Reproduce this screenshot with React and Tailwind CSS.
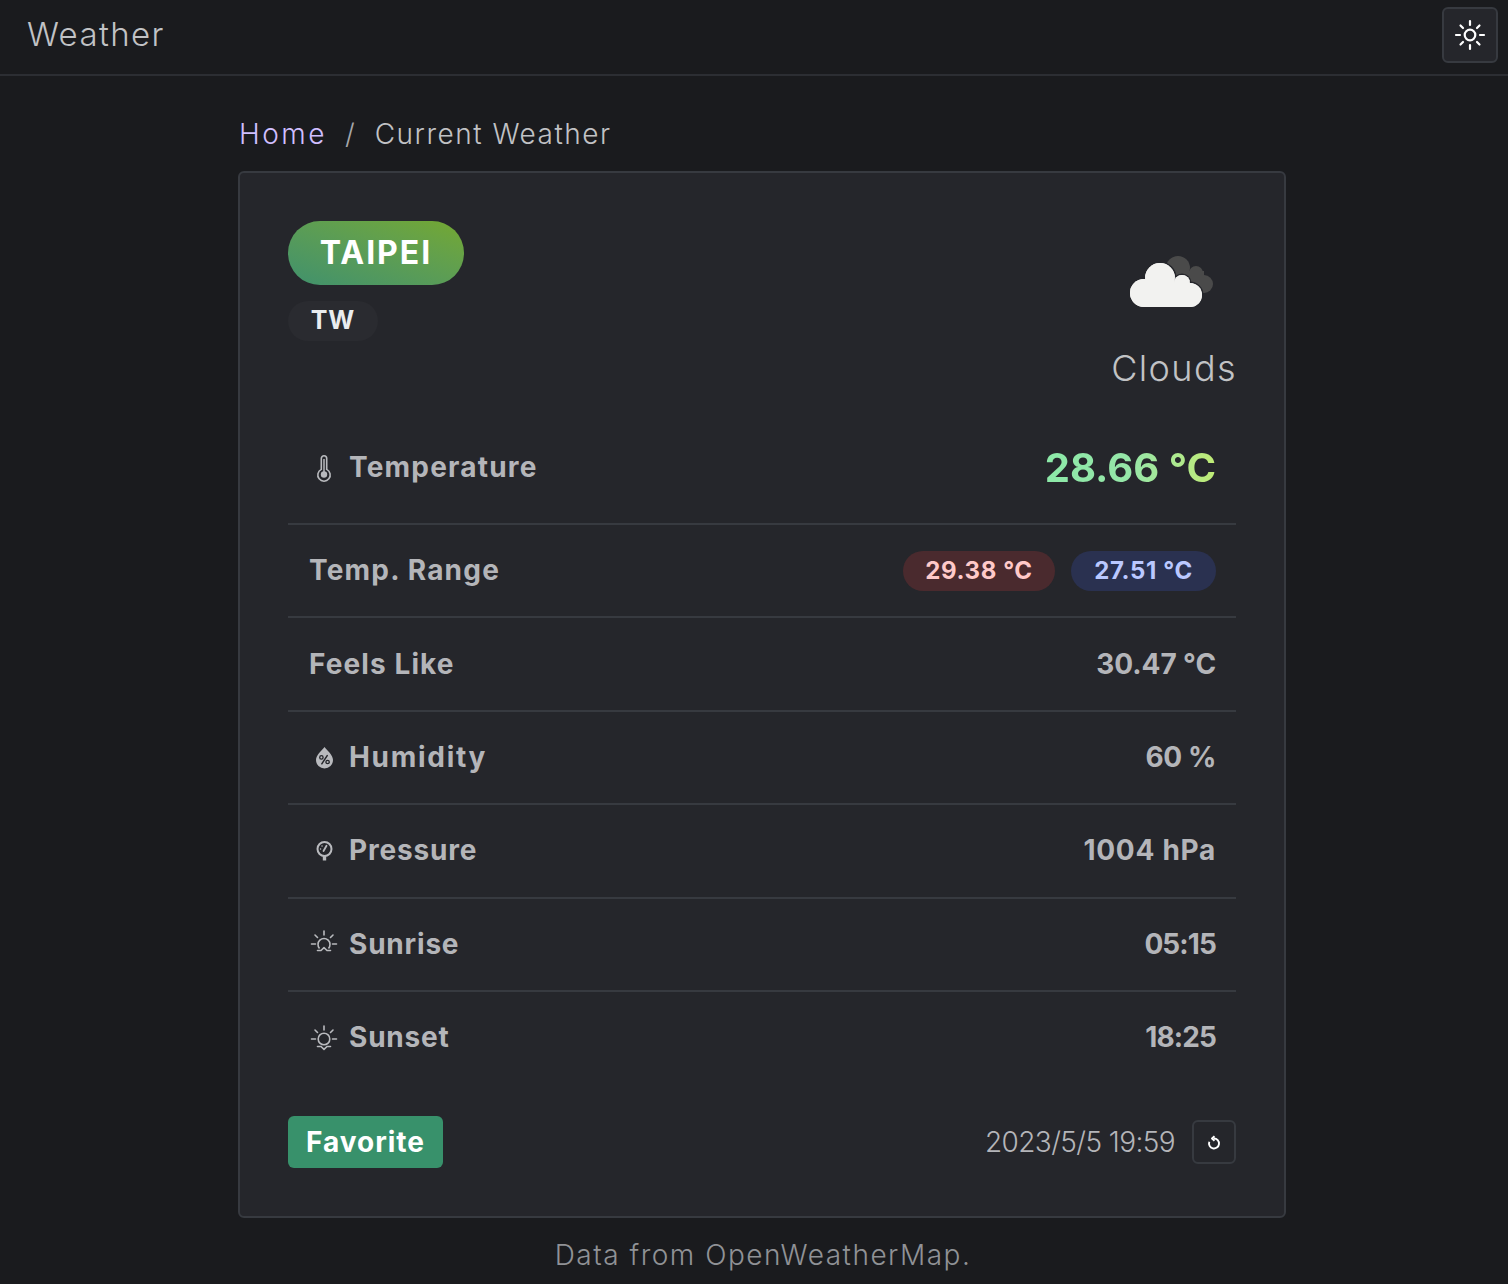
import React from "react";

const C = "#b9babe";
const Thermo = () => (
  <svg width="30" height="30" viewBox="0 0 30 30" fill="none" stroke={C} strokeWidth="1.600">
    <path d="M12.300 5.500a2.700 2.700 0 0 1 5.400 0v10.900a6.200 6.200 0 1 1-5.400 0z" />
    <circle cx="15" cy="21.500" r="3.200" fill={C} stroke="none" />
    <path d="M15 6v13" strokeWidth="1.500" />
  </svg>
);
const Drop = () => (
  <svg width="30" height="30" viewBox="0 0 30 30" fill="none">
    <path d="M15.500 5c3 3.800 8.500 8 8.500 13a8.500 8.500 0 0 1-17 0c0-5 5.500-9.200 8.500-13z" fill={C} />
    <path d="M12.800 21.800l5.400-8.200" stroke="#25262b" strokeWidth="1.500" strokeLinecap="round" />
    <circle cx="12.400" cy="15.400" r="1.700" stroke="#25262b" strokeWidth="1.300" />
    <circle cx="18.600" cy="20" r="1.700" stroke="#25262b" strokeWidth="1.300" />
  </svg>
);
const Gauge = () => (
  <svg width="30" height="30" viewBox="0 0 30 30" fill="none" stroke={C}>
    <circle cx="15.500" cy="13" r="7" strokeWidth="2" />
    <path d="M15.500 20v4.500" strokeWidth="3.400" />
    <path d="M14.500 15l3-5.300" strokeWidth="1.800" strokeLinecap="round" />
    <path d="M11.500 13h.1M13 10h.1" strokeWidth="1.400" strokeLinecap="round" />
  </svg>
);
const Rays = ({ y = 15 }) => (
  <path d={`M2.500 ${y}h4M23.500 ${y}h4M15 ${y - 13}v4M6 ${y - 9}l2.500 2.500M24 ${y - 9}l-2.500 2.500`} strokeLinecap="round" />
);
const Sunrise = () => (
  <svg width="30" height="30" viewBox="0 0 30 30" fill="none" stroke={C} strokeWidth="1.600">
    <Rays />
    <path d="M10.500 19.500a6 6 0 1 1 9 0" />
    <path d="M8.500 21.500h3.500l3-2.800 3 2.800h3.500" strokeLinejoin="round" strokeLinecap="round" />
  </svg>
);
const Sunset = () => (
  <svg width="30" height="30" viewBox="0 0 30 30" fill="none" stroke={C} strokeWidth="1.600">
    <Rays y={15} />
    <circle cx="15" cy="15" r="5.800" />
    <path d="M8.500 22.500h3.500l3 2.800 3-2.800h3.500" strokeLinejoin="round" strokeLinecap="round" />
  </svg>
);
const Cloud = () => (
  <svg width="84" height="52" viewBox="0 0 84 52">
    <g fill="#4a4a4a">
      <circle cx="48" cy="13" r="12" />
      <circle cx="66" cy="18" r="7" />
      <circle cx="74" cy="29" r="9" />
      <rect x="46" y="16" width="28" height="22" />
    </g>
    <g fill="#f2f2f0" stroke="#25262b" strokeWidth="3" paintOrder="stroke">
      <circle cx="30" cy="23" r="15" />
      <circle cx="52" cy="28" r="8" />
      <circle cx="14" cy="38" r="14" />
      <circle cx="60" cy="40" r="12" />
    </g>
    <g fill="#f2f2f0">
      <circle cx="30" cy="23" r="15" />
      <circle cx="52" cy="28" r="8" />
      <circle cx="14" cy="38" r="14" />
      <circle cx="60" cy="40" r="12" />
      <rect x="14" y="28" width="46" height="24" />
    </g>
  </svg>
);

function Row({ icon, label, track, shift = "-translate-y-[1px]", children, first, last }) {
  return (
    <div className={`flex items-center justify-between pl-[21px] pr-[20px] ${first ? "h-[111px] pb-[2px]" : "h-[93.400px]"} ${last ? "" : "border-b-2 border-[#373a40]"}`}>
      <div className="flex items-center">
        {icon && <span className="flex w-[30px] h-[30px] mr-[10px] shrink-0">{icon}</span>}
        <span className={`text-[28px] font-bold text-[#b4b5b9] ${shift} ${track}`}>{label}</span>
      </div>
      {children}
    </div>
  );
}

const Val = ({ track, shift = "-translate-y-[1px]", children }) => <span className={`text-[28px] font-bold text-[#b4b5b9] ${shift} ${track}`}>{children}</span>;

export default function App() {
  return (
    <div className="min-h-[1284px] bg-[#1a1b1e] text-[#c1c2c5] font-['Inter','Noto_Sans',sans-serif] overflow-hidden">
      <header className="h-[76px] border-b-2 border-[#2c2e33] flex items-center justify-between pl-[27px] pr-[10px] pb-[4px]">
        <span className="text-[33px] font-light tracking-[1.400px] text-[#c1c2c5]">Weather</span>
        <button className="w-[56px] h-[56px] rounded-[6px] bg-[#25262b] border-2 border-[#373a40] flex items-center justify-center">
          <svg width="32" height="32" viewBox="0 0 32 32" fill="none" stroke="#fff" strokeWidth="2.200" strokeLinecap="round">
            <circle cx="16" cy="16" r="5.300" />
            <path d="M2 16h4M26 16h4M16 2v4M16 26v4M6.500 6.500l2.500 2.500M25.500 6.500l-2.500 2.500M6.500 25.500l2.500-2.500M25.500 25.500l-2.500-2.500" />
          </svg>
        </button>
      </header>
      <main className="w-[1048px] ml-[238px]">
        <div className="h-[95px] flex items-center pt-[20px] text-[28px] font-light">
          <span className="text-[#d0bfff] tracking-[2.500px] ml-[1px]">Home</span>
          <span className="text-[#a6a7ab] ml-[18px] mr-[20px]">/</span>
          <span className="text-[#c1c2c5] tracking-[1.500px]">Current Weather</span>
        </div>
        <div className="h-[1047px] rounded-[6px] bg-[#25262b] border-2 border-[#373a40] p-[48px]">
          <div className="flex justify-between h-[193px]">
            <div className="flex flex-col items-start gap-[16px]">
              <span className="h-[64px] w-[176px] rounded-full bg-gradient-to-tr from-[#40916c] to-[#74a82f] flex items-center justify-center text-white text-[32px] font-bold tracking-[2px]">TAIPEI</span>
              <span className="h-[40px] w-[90px] rounded-full bg-[#2a2b30] flex items-center justify-center text-[#e9ecef] text-[25px] font-bold tracking-[1px]">TW</span>
            </div>
            <div className="flex flex-col items-end">
              <span className="mt-[34px] mr-[22px]"><Cloud /></span>
              <span className="mt-[39px] -mr-[1px] text-[36px] font-light tracking-[1.400px] text-[#c1c2c5] leading-[44px]">Clouds</span>
            </div>
          </div>
          <div>
            <Row first icon={<Thermo />} label="Temperature" track="tracking-[1.200px]">
              <span className="text-[40px] font-bold tracking-[0px] bg-gradient-to-r from-[#8ce9a8] via-[#96e6a8] to-[#c0eb75] bg-clip-text text-transparent">28.66 °C</span>
            </Row>
            <Row label="Temp. Range" track="tracking-[1.200px]">
              <div className="flex gap-[16px]">
                <span className="h-[40px] w-[152px] rounded-full bg-[#4a2a2e] text-[#ffc9c9] text-[24px] font-bold tracking-[.6px] flex items-center justify-center">29.38 °C</span>
                <span className="h-[40px] w-[145px] rounded-full bg-[#2a3150] text-[#bac8ff] text-[24px] font-bold tracking-[.6px] flex items-center justify-center">27.51 °C</span>
              </div>
            </Row>
            <Row label="Feels Like" track="tracking-[1.100px]" shift="translate-y-0"><Val shift="translate-y-0" track="tracking-[-.1px]">30.47 °C</Val></Row>
            <Row icon={<Drop />} label="Humidity" track="tracking-[1.700px]" shift="translate-y-0"><Val shift="translate-y-0" track="tracking-[-.4px]">60 %</Val></Row>
            <Row icon={<Gauge />} label="Pressure" track="tracking-[.800px]"><Val track="tracking-[.700px]">1004 hPa</Val></Row>
            <Row icon={<Sunrise />} label="Sunrise" track="tracking-[.800px]" shift="translate-y-0"><Val shift="translate-y-0" track="tracking-[-.900px]">05:15</Val></Row>
            <Row last icon={<Sunset />} label="Sunset" track="tracking-[.800px]" shift="-translate-y-[2px]"><Val shift="-translate-y-[2px]" track="tracking-[-.900px]">18:25</Val></Row>
          </div>
          <div className="flex items-center justify-between mt-[31px]">
            <button className="h-[52px] w-[155px] rounded-[6px] bg-[#38916b] text-white text-[28px] font-bold tracking-[1px] flex items-center justify-center">Favorite</button>
            <div className="flex items-center gap-[17px]">
              <span className="text-[28px] font-light tracking-[-.600px] text-[#b4b5b9]">2023/5/5 19:59</span>
              <button className="w-[44px] h-[44px] rounded-[6px] border-2 border-[#373a40] flex items-center justify-center">
                <svg width="16" height="16" viewBox="0 0 16 16" fill="none" stroke="#fff" strokeWidth="1.900" strokeLinejoin="round">
                  <path d="M8 4.500A5 5 0 1 1 3.300 7.800" />
                  <path d="M8.500 2.200L6 4.500l2.500 2.300" />
                </svg>
              </button>
            </div>
          </div>
        </div>
        <p className="mt-[20px] text-center text-[28px] font-light tracking-[1.500px] text-[#909296] leading-[34px] ml-[2px]">Data from OpenWeatherMap.</p>
      </main>
    </div>
  );
}
